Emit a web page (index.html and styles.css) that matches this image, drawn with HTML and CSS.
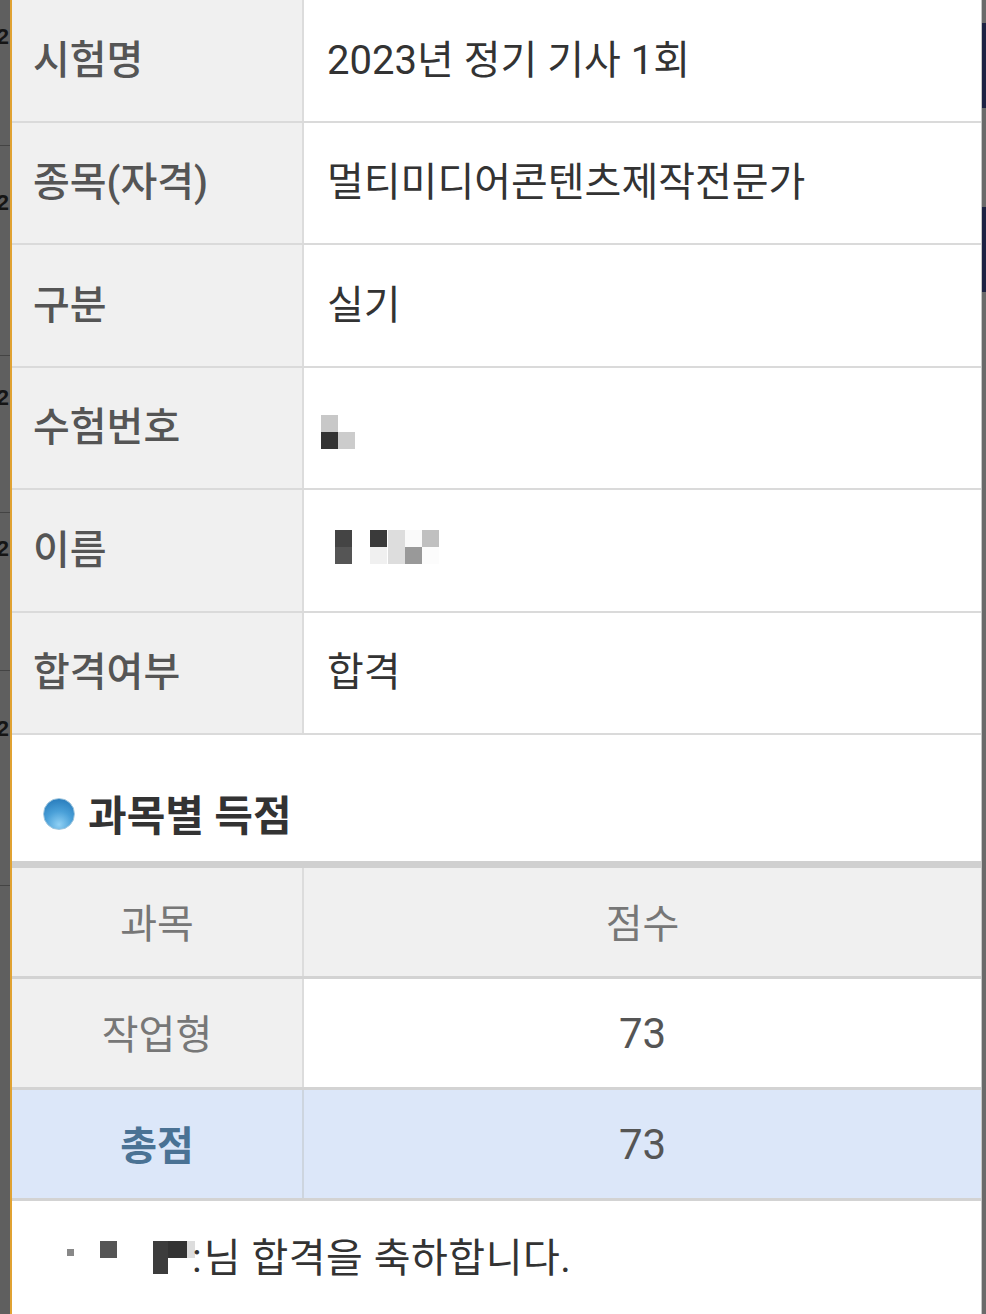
FILE: index.html
```html
<!DOCTYPE html>
<html lang="ko">
<head>
<meta charset="utf-8">
<title>합격자 발표</title>
<link rel="stylesheet" href="styles.css">
</head>
<body>
<div class="screen">
  <div class="edge-left" aria-hidden="true">
    <div class="seg seg-a"></div>
    <div class="seg seg-b"></div>
    <div class="seg seg-c"></div>
    <div class="seg seg-d"></div>
    <div class="seg seg-e"></div>
  </div>

  <main class="sheet">
    <div class="info">
      <div class="row"><div class="th">시험명</div><div class="td">2023년 정기 기사 1회</div></div>
      <div class="row"><div class="th">종목(자격)</div><div class="td">멀티미디어콘텐츠제작전문가</div></div>
      <div class="row"><div class="th">구분</div><div class="td">실기</div></div>
      <div class="row">
        <div class="th">수험번호</div>
        <div class="td td-mosaic">
          <span class="mz mz-num">
            <i class="px c-c8"></i><i class="px c-fff"></i>
            <i class="px c-33"></i><i class="px c-cc"></i>
          </span>
        </div>
      </div>
      <div class="row">
        <div class="th">이름</div>
        <div class="td td-mosaic">
          <span class="mz mz-name">
            <i class="px c-44"></i><i class="px c-fff"></i><i class="px c-3a"></i><i class="px c-dd"></i><i class="px c-fa"></i><i class="px c-c0"></i>
            <i class="px c-55"></i><i class="px c-fff"></i><i class="px c-f0"></i><i class="px c-dd"></i><i class="px c-99"></i><i class="px c-fc"></i>
          </span>
        </div>
      </div>
      <div class="row"><div class="th">합격여부</div><div class="td">합격</div></div>
    </div>

    <h2 class="section-title"><span class="dot"></span>과목별 득점</h2>

    <div class="score">
      <div class="srow head"><div class="c1">과목</div><div class="c2">점수</div></div>
      <div class="srow"><div class="c1">작업형</div><div class="c2 num">73</div></div>
      <div class="srow total"><div class="c1">총점</div><div class="c2 num">73</div></div>
    </div>

    <p class="message">
      <span class="blur">
        <i class="b1"></i>
        <i class="b2"></i>
        <i class="b3"></i>
        <i class="b4"></i>
        <i class="b5"></i>
      </span><span class="msg-text"><span class="colon">:</span>님 합격을 축하합니다.</span>
    </p>
  </main>

  <div class="edge-right">
    <div class="navy navy-a"></div>
    <div class="navy navy-b"></div>
  </div>
</div>
</body>
</html>
```

FILE: styles.css
```css
html, body {
  margin: 0;
  padding: 0;
  background: #ffffff;
}

.screen {
  display: flex;
  height: 1314px;
  overflow: hidden;
  font-family: "Roboto", "Noto Sans CJK KR", sans-serif;
}

/* left partially visible page behind */
.edge-left {
  flex: none;
  width: 10px;
  background: #5f5f5f;
  border-right: 2px solid #e0a232;
  overflow: hidden;
  display: flex;
  flex-direction: column;
}

.seg {
  flex: none;
  display: flex;
  justify-content: flex-end;
  align-items: flex-start;
  border-bottom: 1px solid #444;
  box-sizing: border-box;
  font-family: "Liberation Sans", sans-serif;
  font-weight: bold;
  font-size: 22px;
  line-height: 1;
  color: #151515;
}

.seg::before {
  content: "2";
  flex: none;
  margin-right: 1px;
}

.seg-a { height: 146px; padding-top: 26px; }
.seg-b { height: 210px; padding-top: 46px; }
.seg-c { height: 157px; padding-top: 31px; }
.seg-d { height: 158px; padding-top: 25px; }
.seg-e { height: 215px; padding-top: 47px; }

/* right edge */
.edge-right {
  flex: none;
  width: 4px;
  border-left: 1px solid #c6c6c6;
  background: #6a6a6a;
  display: flex;
  flex-direction: column;
}

.navy {
  height: 85px;
  background: #1d2243;
}

.navy-a { margin-top: 23px; }
.navy-b { margin-top: 99px; }

/* main sheet */
.sheet {
  flex: 1;
  min-width: 0;
  background: #ffffff;
}

.info .row {
  display: grid;
  grid-template-columns: 292px 1fr;
  height: 122.5px;
  box-sizing: border-box;
  border-bottom: 2px solid #dadada;
}

.th {
  background: #f0f0f0;
  border-right: 2px solid #dcdcdc;
  padding: 0 0 7px 21px;
  display: flex;
  align-items: center;
  font-size: 40px;
  font-weight: 500;
  color: #555555;
}

.td {
  padding: 0 0 7px 23px;
  display: flex;
  align-items: center;
  font-size: 40px;
  font-weight: 400;
  color: #333333;
}

.td-mosaic {
  padding-bottom: 0;
}

/* pixelated (censored) blocks */
.mz {
  display: grid;
}

.mz .px {
  display: block;
  width: 17px;
  height: 17px;
}

.mz-num {
  grid-template-columns: repeat(2, 17px);
  margin-left: -6px;
  margin-top: 8px;
}

.mz-name {
  grid-template-columns: 18px 17px 18px 17px 17px 18px;
  margin-left: 8px;
  margin-top: -6px;
}

.c-fff { background: #ffffff; }
.c-c8 { background: #c8c8c8; }
.c-cc { background: #cccccc; }
.c-33 { background: #333333; }
.c-44 { background: #444444; }
.c-55 { background: #555555; }
.c-3a { background: #3a3a3a; }
.c-dd { background: #dddddd; }
.c-fa { background: #fafafa; }
.c-c0 { background: #c0c0c0; }
.c-f0 { background: #f0f0f0; }
.c-99 { background: #999999; }
.c-fc { background: #fcfcfc; }

/* section heading */
.section-title {
  margin: 0;
  height: 126px;
  box-sizing: border-box;
  padding: 28px 0 0 31px;
  display: flex;
  align-items: center;
  font-size: 42px;
  font-weight: 700;
  color: #333333;
}

.dot {
  flex: none;
  width: 32px;
  height: 32px;
  border-radius: 50%;
  margin: 4px 13px 0 0;
  box-sizing: border-box;
  border: 1px solid #9fc6de;
  background: radial-gradient(circle at 50% 85%, #8fd0f4 0%, #4aa0d8 45%, #1f72b4 100%);
}

/* score table */
.score {
  border-top: 7px solid #d0d0d0;
}

.srow {
  display: grid;
  grid-template-columns: 292px 1fr;
  height: 111px;
  box-sizing: border-box;
  border-bottom: 3px solid #d3d3d3;
}

.c1, .c2 {
  display: flex;
  align-items: center;
  justify-content: center;
  padding-bottom: 3px;
  font-size: 40px;
  color: #777777;
}

.c1 {
  background: #f0f0f0;
  border-right: 2px solid #dcdcdc;
}

.head .c2 {
  background: #f0f0f0;
}

.c2.num {
  font-size: 42px;
  color: #555555;
  padding-bottom: 0;
}

.total .c1,
.total .c2 {
  background: #dce7f9;
}

.total .c1 {
  font-weight: 700;
  color: #4a7294;
  border-right-color: #cdd5df;
}

/* closing message */
.message {
  margin: 0;
  padding: 25px 0 0 55px;
  display: flex;
  align-items: center;
  font-size: 40px;
  color: #333333;
}

.blur {
  display: flex;
  align-items: flex-start;
  height: 34px;
  margin-top: 6px;
}

.blur i {
  display: block;
}

.b1 { width: 7px; height: 7px; margin-top: 8px; background: #888888; }
.b2 { width: 17px; height: 17px; margin-left: 26px; background: #555555; }
.b3 { width: 15px; height: 33px; margin-left: 36px; background: #3c3c3c; }
.b4 { width: 19px; height: 17px; background: #333333; }
.b5 { width: 8px; height: 17px; background: #dddddd; }

.msg-text {
  letter-spacing: 0.5px;
  margin-left: -3px;
}

.colon {
  letter-spacing: 0;
  margin-right: 2px;
}
```
